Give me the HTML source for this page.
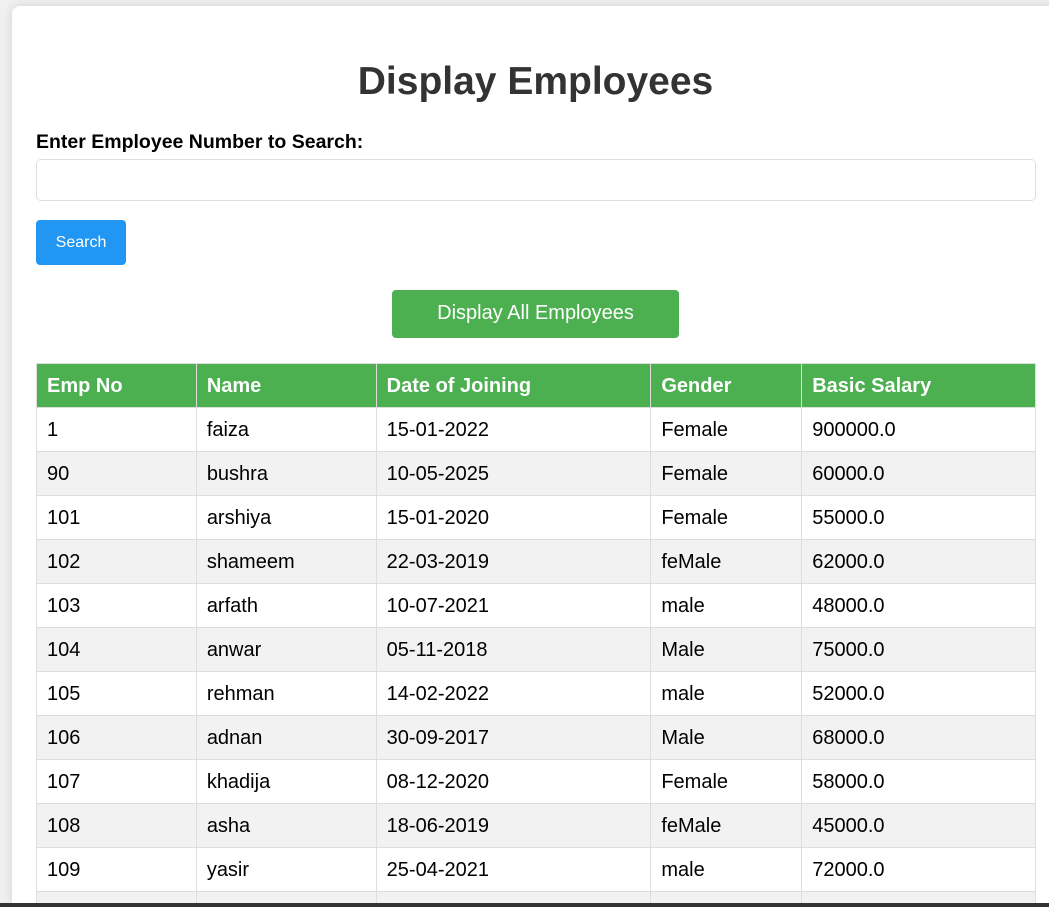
<!DOCTYPE html>
<html><head><style>
html,body{margin:0;padding:0;width:1049px;height:907px;overflow:hidden;background:#f0f0f0;font-family:"Liberation Sans",Arial,sans-serif;}
.card{position:absolute;left:12px;top:6px;width:1047px;height:897px;overflow:hidden;background:#fff;border-radius:8px 8px 0 0;box-shadow:0 0 10px rgba(0,0,0,0.12);}
h1{position:absolute;left:0;width:1047px;top:53px;margin:0;text-align:center;font-size:39px;font-weight:bold;color:#333;line-height:46px;}
.lbl{position:absolute;left:24px;top:124px;font-size:19.5px;font-weight:bold;color:#000;line-height:24px;}
.inp{position:absolute;left:24px;top:153px;width:998px;height:40px;border:1px solid #ddd;border-radius:5px;}
.sbtn{position:absolute;left:24px;top:214px;width:90px;height:45px;background:#2196F3;border-radius:4px;color:#fff;font-size:16px;line-height:45px;text-align:center;}
.abtn{position:absolute;left:380px;top:284px;width:287px;height:48px;background:#4CAF50;border-radius:4px;color:#fff;font-size:20px;line-height:47px;text-align:center;}
table{position:absolute;left:24px;top:357px;border-collapse:collapse;width:1000px;font-size:20px;}
td,th{border:1px solid #ddd;height:44px;padding:2px 0 0 10px;box-sizing:border-box;text-align:left;color:#000;}
th{background:#4CAF50;color:#fff;font-weight:bold;}
tr:nth-child(odd) td{background:#f2f2f2;}
.bar{position:absolute;left:0;top:903px;width:1049px;height:4px;background:#333;}
</style></head><body>
<div class="card">
<h1>Display Employees</h1>
<div class="lbl">Enter Employee Number to Search:</div>
<div class="inp"></div>
<div class="sbtn">Search</div>
<div class="abtn">Display All Employees</div>
<table>
<colgroup><col style="width:160px"><col style="width:180px"><col style="width:275px"><col style="width:151px"><col style="width:234px"></colgroup>
<tr><th>Emp No</th><th>Name</th><th>Date of Joining</th><th>Gender</th><th>Basic Salary</th></tr>
<tr><td>1</td><td>faiza</td><td>15-01-2022</td><td>Female</td><td>900000.0</td></tr>
<tr><td>90</td><td>bushra</td><td>10-05-2025</td><td>Female</td><td>60000.0</td></tr>
<tr><td>101</td><td>arshiya</td><td>15-01-2020</td><td>Female</td><td>55000.0</td></tr>
<tr><td>102</td><td>shameem</td><td>22-03-2019</td><td>feMale</td><td>62000.0</td></tr>
<tr><td>103</td><td>arfath</td><td>10-07-2021</td><td>male</td><td>48000.0</td></tr>
<tr><td>104</td><td>anwar</td><td>05-11-2018</td><td>Male</td><td>75000.0</td></tr>
<tr><td>105</td><td>rehman</td><td>14-02-2022</td><td>male</td><td>52000.0</td></tr>
<tr><td>106</td><td>adnan</td><td>30-09-2017</td><td>Male</td><td>68000.0</td></tr>
<tr><td>107</td><td>khadija</td><td>08-12-2020</td><td>Female</td><td>58000.0</td></tr>
<tr><td>108</td><td>asha</td><td>18-06-2019</td><td>feMale</td><td>45000.0</td></tr>
<tr><td>109</td><td>yasir</td><td>25-04-2021</td><td>male</td><td>72000.0</td></tr>
<tr><td>&nbsp;</td><td>&nbsp;</td><td>&nbsp;</td><td>&nbsp;</td><td>&nbsp;</td></tr>
</table>
</div>
<div class="bar"></div>
</body></html>
